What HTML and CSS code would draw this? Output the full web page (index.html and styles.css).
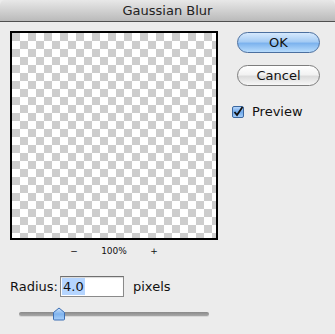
FILE: index.html
```html
<!DOCTYPE html>
<html lang="en">
<head>
    <meta charset="UTF-8">
    <title>Gaussian Blur</title>
    <link rel="stylesheet" href="styles.css">
</head>
<body>
    <div class="window">
        <div class="titlebar">Gaussian Blur</div>
        <div class="content">
            <div class="left">
                <div class="preview"></div>
                <div class="zoom">
                    <span>&minus;</span>
                    <span>100%</span>
                    <span>+</span>
                </div>
                <div class="radius">
                    <label class="radius-label">Radius:</label>
                    <div class="field"><span class="selected">4.0</span></div>
                    <span class="unit">pixels</span>
                </div>
                <div class="slider">
                    <div class="track"></div>
                    <svg class="thumb" width="14" height="14" viewBox="0 0 14 14">
                        <defs>
                            <linearGradient id="tg" x1="0" y1="0" x2="0" y2="1">
                                <stop offset="0" stop-color="#cfe4fb"/>
                                <stop offset="0.5" stop-color="#7fb3ee"/>
                                <stop offset="1" stop-color="#a9d0fa"/>
                            </linearGradient>
                        </defs>
                        <path d="M7 1 L12.5 5.5 L12.5 12 Q12.5 13 11.5 13 L2.5 13 Q1.5 13 1.5 12 L1.5 5.5 Z" fill="url(#tg)" stroke="#3d6fb4" stroke-width="1"/>
                    </svg>
                </div>
            </div>
            <div class="right">
                <button class="btn btn-default">OK</button>
                <button class="btn">Cancel</button>
                <div class="check-row">
                    <svg class="checkbox" width="12" height="12" viewBox="0 0 12 12">
                        <defs>
                            <linearGradient id="cg" x1="0" y1="0" x2="0" y2="1">
                                <stop offset="0" stop-color="#bcd9fb"/>
                                <stop offset="0.5" stop-color="#6ea8ea"/>
                                <stop offset="1" stop-color="#a8d0fb"/>
                            </linearGradient>
                        </defs>
                        <rect x="0.5" y="0.5" width="11" height="11" rx="1.5" fill="url(#cg)" stroke="#3b679f"/>
                        <path d="M2.5 6 L5 9 L10.5 1" fill="none" stroke="#111" stroke-width="1.8"/>
                    </svg>
                    <span>Preview</span>
                </div>
            </div>
        </div>
    </div>
</body>
</html>
```

FILE: styles.css
```css
body {
    margin: 0;
    padding: 0;
    background-color: #ececec;
    font-family: "DejaVu Sans", "Liberation Sans", sans-serif;
    color: #111;
}
.window {
    width: 335px;
    height: 334px;
    background-color: #ececec;
    overflow: hidden;
}
.titlebar {
    height: 21px;
    line-height: 22px;
    text-align: center;
    font-size: 13px;
    color: #222;
    background: linear-gradient(#e8e8e8, #bababa);
    border-bottom: 1px solid #505050;
    border-radius: 5px 5px 0 0;
}
.content {
    display: flex;
    padding: 9px 0 0 10px;
}
.left {
    width: 208px;
}
.preview {
    width: 204px;
    height: 205px;
    border: 2px solid #000;
    background-color: #fff;
    background-image: repeating-conic-gradient(#fff 0 25%, #cdcdcd 0 50%);
    background-size: 16px 16px;
    background-position: 0 0;
}
.zoom {
    display: flex;
    justify-content: center;
    margin-top: 6px;
    font-size: 9px;
    line-height: 11px;
}
.zoom span {
    width: 40px;
    text-align: center;
}
.radius {
    display: flex;
    align-items: center;
    margin-top: 19px;
    font-size: 13px;
}
.radius-label {
    width: 50px;
}
.field {
    width: 60px;
    height: 17px;
    border: 1px solid #8a8a8a;
    border-top-color: #6f6f6f;
    background-color: #fff;
    padding: 1px;
    box-shadow: inset 0 1px 1px rgba(0, 0, 0, 0.15);
}
.selected {
    display: inline-block;
    background-color: #b5d5ff;
    line-height: 17px;
    padding: 0 1px 0 1px;
}
.unit {
    margin-left: 9px;
}
.slider {
    position: relative;
    height: 16px;
    margin-top: 10px;
}
.track {
    position: absolute;
    left: 9px;
    top: 5px;
    width: 190px;
    height: 4px;
    border-radius: 2px;
    background: linear-gradient(#8a8a8a, #a8a8a8);
    box-shadow: 0 1px 0 #d8d8d8;
}
.thumb {
    position: absolute;
    left: 42px;
    top: 0;
}
.right {
    display: flex;
    flex-direction: column;
    margin-left: 14px;
    padding-top: 1px;
}
.btn {
    width: 83px;
    height: 21px;
    margin-left: 5px;
    margin-bottom: 12px;
    border-radius: 11px;
    border: 1px solid #7d7d7d;
    background: linear-gradient(#ffffff 0%, #f2f2f2 45%, #dcdcdc 55%, #f7f7f7 100%);
    font-family: "DejaVu Sans", "Liberation Sans", sans-serif;
    font-size: 13px;
    color: #111;
    padding: 0;
    line-height: 19px;
}
.btn-default {
    border-color: #4b6f9f;
    background: linear-gradient(#d6e9fd 0%, #a6ccf4 45%, #7db3ee 55%, #b8dcfc 100%);
}
.check-row {
    display: flex;
    align-items: center;
    margin-top: 6px;
    font-size: 13px;
}
.checkbox {
    margin-right: 8px;
}
```
